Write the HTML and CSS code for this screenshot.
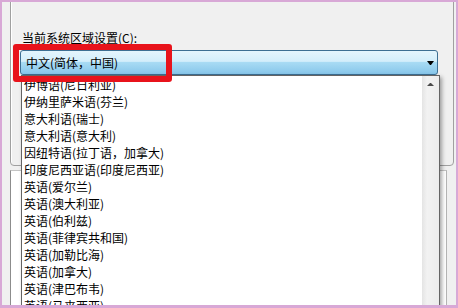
FILE: index.html
```html
<!DOCTYPE html>
<html>
<head>
<meta charset="utf-8">
<title>区域设置</title>
<link rel="stylesheet" href="styles.css">
</head>

<body>

<div class="dialog">

<div class="group">
<div class="field-label">当前系统区域设置(C):</div>
<div class="combo">
<span class="combo-value">中文(简体，中国)</span>
<span class="combo-arrow"></span>
</div>
</div>

<div class="lower"></div>

<div class="dropdown">
<ul class="options">
<li>伊博语(尼日利亚)</li>
<li>伊纳里萨米语(芬兰)</li>
<li>意大利语(瑞士)</li>
<li>意大利语(意大利)</li>
<li>因纽特语(拉丁语，加拿大)</li>
<li>印度尼西亚语(印度尼西亚)</li>
<li>英语(爱尔兰)</li>
<li>英语(澳大利亚)</li>
<li>英语(伯利兹)</li>
<li>英语(菲律宾共和国)</li>
<li>英语(加勒比海)</li>
<li>英语(加拿大)</li>
<li>英语(津巴布韦)</li>
<li>英语(马来西亚)</li>
</ul>
<div class="scrollbar">
<div class="scroll-up"><span class="arrow-up"></span></div>
</div>
</div>

<div class="callout"></div>

</div>

</body>
</html>
```

FILE: styles.css
```css
body {
  margin: 0;
  background: #d8a8d6;
  font-family: "Noto Sans CJK SC", "Noto Sans", sans-serif;
  font-size: 12px;
  line-height: 17px;
  color: #000;
}

.dialog {
  position: relative;
  margin: 2px 2px 0 2px;
  height: 303px;
  padding-left: 8px;
  background: #f0f0f0;
  overflow: hidden;
  box-sizing: border-box;
}

.group {
  width: 444px;
  height: 174px;
  margin-top: -10px;
  padding: 36px 0 0 9px;
  border: 1px solid #a0a0a0;
  border-radius: 4px;
  box-shadow: inset 1px 1px 0 #fff;
  box-sizing: border-box;
}

.field-label {
  padding-left: 2px;
}

.combo {
  display: flex;
  align-items: center;
  justify-content: space-between;
  width: 418px;
  height: 25px;
  margin-top: 4px;
  padding: 0 3px 0 5px;
  border: 1px solid #3d6f93;
  border-radius: 3px;
  background: linear-gradient(#e4f5fd, #d3eefb 45%, #a8dbf4 50%, #87c6ea);
  box-sizing: border-box;
}

.combo-arrow {
  width: 1px;
  height: 0;
  border-left: 3px solid transparent;
  border-right: 3px solid transparent;
  border-top: 4px solid #000;
}

.lower {
  width: 437px;
  height: 200px;
  margin-top: 4px;
  border-left: 1px solid #8c8c8c;
  border-top: 1px solid #c4c4c4;
  border-right: 1px solid #b4b4b4;
  background: #fff;
  box-sizing: border-box;
}

.dropdown {
  position: absolute;
  left: 19px;
  top: 73px;
  bottom: -20px;
  width: 419px;
  display: flex;
  border: 1px solid #646464;
  background: #fff;
  box-shadow: 2px 2px 4px rgba(0, 0, 0, 0.35);
  box-sizing: border-box;
}

.options {
  flex: 1;
  margin: 0;
  padding: 0 0 0 2px;
  list-style: none;
}

.scrollbar {
  width: 17px;
  background: linear-gradient(to right, #e4e4e4, #f2f2f2 30%, #ececec);
}

.scroll-up {
  display: flex;
  align-items: center;
  justify-content: center;
  height: 17px;
}

.arrow-up {
  width: 1px;
  height: 0;
  border-left: 3px solid transparent;
  border-right: 3px solid transparent;
  border-bottom: 3px solid #4a4a4a;
}

.callout {
  position: absolute;
  left: 11px;
  top: 42px;
  width: 159px;
  height: 38px;
  border: 6px solid #e8131b;
  border-radius: 3px;
  box-sizing: border-box;
}
```
